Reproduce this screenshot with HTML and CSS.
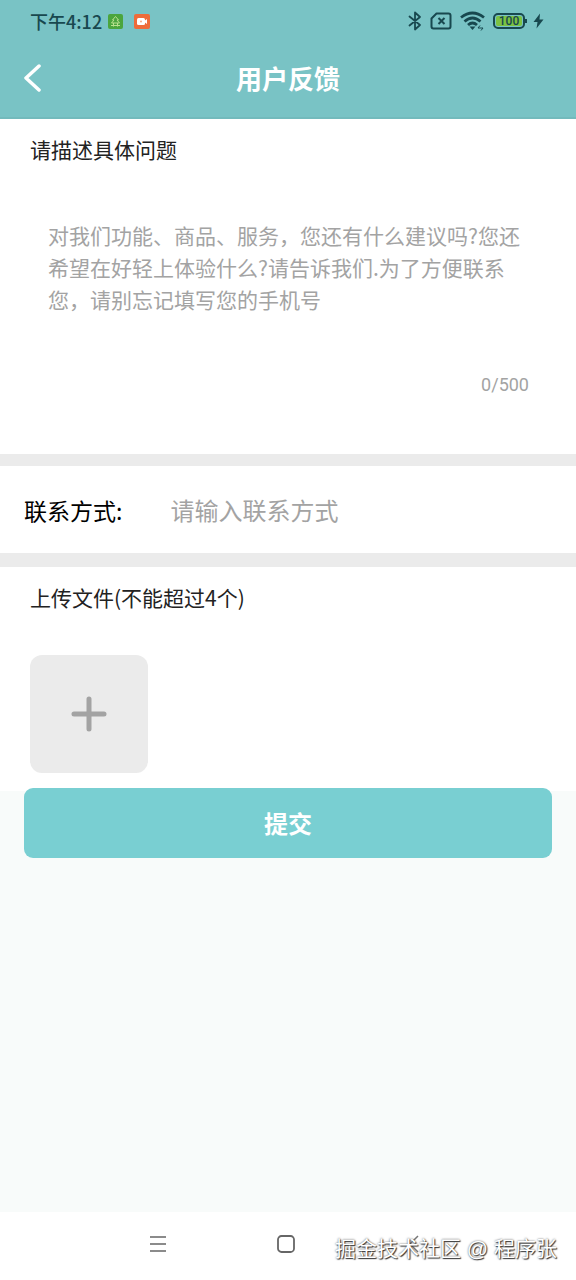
FILE: index.html
```html
<!DOCTYPE html>
<html lang="zh-CN">
<head>
<meta charset="utf-8">
<meta name="viewport" content="width=device-width, initial-scale=1">
<title>用户反馈</title>
<link rel="stylesheet" href="styles.css">
</head>
<body>
<div class="screen">
  <header class="top">
    <div class="status">
      <div class="status-group">
        <span class="time">下午4:12</span>
        <svg class="app-icon" width="15" height="15" viewBox="0 0 15 15" aria-hidden="true">
          <rect width="15" height="15" rx="2" fill="#4ba53d"/>
          <path d="M7.5 2.5 L4.5 6 H6 L3.5 9 H11.5 L9 6 H10.500Z M3 11.500H12 M5.500 9V12.500 M9.500 9V12.500" fill="none" stroke="#b9e08e" stroke-width="1"/>
        </svg>
        <svg class="app-icon app-icon-video" width="16" height="15" viewBox="0 0 16 15" aria-hidden="true">
          <rect width="16" height="15" rx="2" fill="#ee6c3a"/>
          <rect x="3" y="4" width="8" height="7" rx="1.500" fill="#fff"/>
          <path d="M9.500 7.500 L13 5 V10Z" fill="#fff"/>
          <circle cx="7" cy="7.500" r="1" fill="#f4a582"/>
        </svg>
      </div>
      <div class="status-group status-right">
        <svg width="14" height="20" viewBox="0 0 14 20" fill="none" stroke="#18484f" stroke-width="1.800" stroke-linejoin="round" stroke-linecap="round" aria-hidden="true">
          <path d="M1.500 5.500 L12 14 L7 18.500 V1.500 L12 6 L1.500 14.500"/>
        </svg>
        <svg width="22" height="18" viewBox="0 0 22 18" fill="none" stroke="#18484f" stroke-width="2" stroke-linejoin="round" aria-hidden="true">
          <path d="M6.500 1.500 H18.500 Q20.500 1.500 20.500 3.500 V14.500 Q20.500 16.500 18.500 16.500 H3.500 Q1.500 16.500 1.500 14.500 V6.500Z"/>
          <path d="M8.500 6 L14.500 12 M14.500 6 L8.500 12"/>
        </svg>
        <svg width="25" height="20" viewBox="0 0 25 20" fill="none" stroke="#18484f" stroke-width="2.800" aria-hidden="true">
          <path d="M1 6.500 Q12.500 -2.500 24 6.500"/>
          <path d="M4.500 10.500 Q12.500 3.500 20.500 10.500"/>
          <path d="M8 14 Q12.500 10 17 14"/>
          <path d="M9.500 15.500 L12.500 19 L15.500 15.500Z" fill="#18484f" stroke="none"/>
          <path d="M18 17 H23 M20 14.500 L18 17 M21 19.500 L23 17" stroke-width="1"/>
        </svg>
        <span class="battery"><span class="battery-level">100</span></span>
        <svg class="bolt" width="11" height="16" viewBox="0 0 11 16" aria-hidden="true">
          <path d="M7 0.500 L0.500 9 H4.500 L3.500 15.500 L10.500 6.500 H6.500Z" fill="#18484f"/>
        </svg>
      </div>
    </div>
    <div class="navbar">
      <button class="back" type="button" aria-label="返回">
        <svg width="18" height="30" viewBox="0 0 18 30" fill="none" stroke="#fff" stroke-width="3.500" stroke-linecap="round" stroke-linejoin="round" aria-hidden="true"><path d="M15 3 L2 15 L15 27"/></svg>
      </button>
      <h1 class="title">用户反馈</h1>
    </div>
  </header>

  <form class="form">
    <section class="panel describe">
      <label class="label" for="detail">请描述具体问题</label>
      <textarea class="detail" id="detail" maxlength="500" placeholder="对我们功能、商品、服务，您还有什么建议吗?您还希望在好轻上体验什么?请告诉我们.为了方便联系您，请别忘记填写您的手机号"></textarea>
      <span class="count">0/500</span>
    </section>
    <section class="panel contact">
      <label class="contact-label" for="contact">联系方式:</label>
      <input class="contact-input" id="contact" type="text" placeholder="请输入联系方式">
    </section>
    <section class="panel upload">
      <h2 class="label">上传文件(不能超过4个)</h2>
      <button class="add" type="button" aria-label="添加文件">
        <svg width="36" height="36" viewBox="0 0 36 36" fill="none" stroke="#a3a3a3" stroke-width="5" stroke-linecap="round" aria-hidden="true"><path d="M3 18 H33 M18 3 V33"/></svg>
      </button>
    </section>
    <button class="submit" type="button">提交</button>
  </form>

  <nav class="system">
    <button class="system-button" type="button" aria-label="菜单">
      <svg width="18" height="18" viewBox="0 0 18 18" fill="none" stroke="#666" stroke-width="1.500" aria-hidden="true"><path d="M1 2 H17 M1 9 H17 M1 16 H17"/></svg>
    </button>
    <button class="system-button" type="button" aria-label="主屏幕">
      <svg width="18" height="18" viewBox="0 0 18 18" fill="none" stroke="#666" stroke-width="1.800" aria-hidden="true"><rect x="1" y="1" width="16" height="16" rx="3.500"/></svg>
    </button>
    <button class="system-button" type="button" aria-label="后退">
      <svg width="18" height="18" viewBox="0 0 18 18" fill="none" stroke="#777" stroke-width="1.500" aria-hidden="true"><path d="M13 1 L5 9 L13 17"/></svg>
    </button>
    <span class="watermark">掘金技术社区 @ 程序张</span>
  </nav>
</div>
</body>
</html>
```
FILE: styles.css
```css
* {
  box-sizing: border-box;
}

body {
  margin: 0;
  font-family: "Noto Sans CJK SC", sans-serif;
  color: #222;
  background: #f8fbfa;
}

button,
input,
textarea {
  margin: 0;
  padding: 0;
  border: 0;
  font-family: inherit;
  background: none;
}

svg {
  display: block;
}

.screen {
  display: flex;
  flex-direction: column;
  min-height: 100vh;
}

.top {
  background: #79c3c5;
  border-bottom: 2px solid #73babc;
}

.status {
  display: flex;
  justify-content: space-between;
  align-items: center;
  height: 42px;
  padding: 0 32px 0 30px;
}

.status-group {
  display: flex;
  align-items: center;
}

.time {
  font-size: 18px;
  line-height: 24px;
  font-weight: 500;
  color: #18484f;
}

.app-icon {
  margin-left: 6px;
}

.app-icon-video {
  margin-left: 11px;
}

.status-right {
  gap: 8px;
}

.battery {
  position: relative;
  width: 32px;
  height: 16px;
  padding: 1px;
  border: 2px solid #18484f;
  border-radius: 5px;
}

.battery::after {
  content: "";
  position: absolute;
  top: 4px;
  right: -4px;
  width: 2px;
  height: 4px;
  background: #18484f;
}

.battery-level {
  display: block;
  border-radius: 2px;
  background: #7cc242;
  color: #18484f;
  font-family: Roboto, sans-serif;
  font-size: 12px;
  line-height: 10px;
  font-weight: 500;
  text-align: center;
}

.navbar {
  display: grid;
  grid-template-columns: 64px 1fr 64px;
  align-items: center;
  height: 75px;
  padding-bottom: 3px;
}

.back {
  display: flex;
  align-items: center;
  height: 48px;
  padding-left: 24px;
}

.title {
  margin: 0;
  font-size: 26px;
  line-height: 36px;
  font-weight: 700;
  text-align: center;
  color: #fff;
}

.form {
  flex: 1;
}

.panel {
  background: #fff;
}

.label {
  display: block;
  margin: 0;
  font-size: 21px;
  line-height: 30px;
  font-weight: 400;
}

.describe {
  display: flex;
  flex-direction: column;
  padding: 15px 30px 57px;
  border-bottom: 12px solid #ebebeb;
}

.detail {
  height: 154px;
  margin: 55px 17px 0 18px;
  font-size: 21px;
  line-height: 32px;
  color: #222;
  resize: none;
  overflow: hidden;
}

::placeholder {
  color: #a3a3a3;
  opacity: 1;
}

.count {
  padding-right: 17px;
  font-family: Roboto, sans-serif;
  font-size: 18px;
  line-height: 24px;
  text-align: right;
  color: #a3a3a3;
}

.detail,
.contact-input {
  outline: none;
}

.contact {
  display: flex;
  align-items: center;
  gap: 48px;
  padding: 24px 24px 23px;
  border-bottom: 14px solid #ebebeb;
}

.contact-label {
  font-size: 23px;
  line-height: 40px;
  color: #000;
}

.contact-input {
  flex: 1;
  min-width: 0;
  height: 40px;
  font-size: 24px;
  line-height: 40px;
}

.upload {
  padding: 15px 30px 18px;
}

.add {
  display: flex;
  align-items: center;
  justify-content: center;
  width: 118px;
  height: 118px;
  margin-top: 43px;
  border-radius: 12px;
  background: #ebebeb;
}

.submit {
  display: block;
  width: calc(100% - 48px);
  height: 70px;
  margin: -3px 24px 24px;
  border-radius: 9px;
  background: #79cfd2;
  font-size: 24px;
  line-height: 36px;
  font-weight: 700;
  color: #fff;
}

.system {
  position: relative;
  display: flex;
  justify-content: center;
  gap: 110px;
  height: 68px;
  padding: 0 4px 4px 0;
  background: #fff;
}

.system-button {
  display: flex;
  align-items: center;
}

.watermark {
  position: absolute;
  right: 19px;
  bottom: 16px;
  font-family: "Liberation Sans", "Noto Sans CJK SC", sans-serif;
  font-size: 21px;
  line-height: 30px;
  color: #fff;
  text-shadow: 1px 1px 1px #333, 0 0 2px #555;
}
```
